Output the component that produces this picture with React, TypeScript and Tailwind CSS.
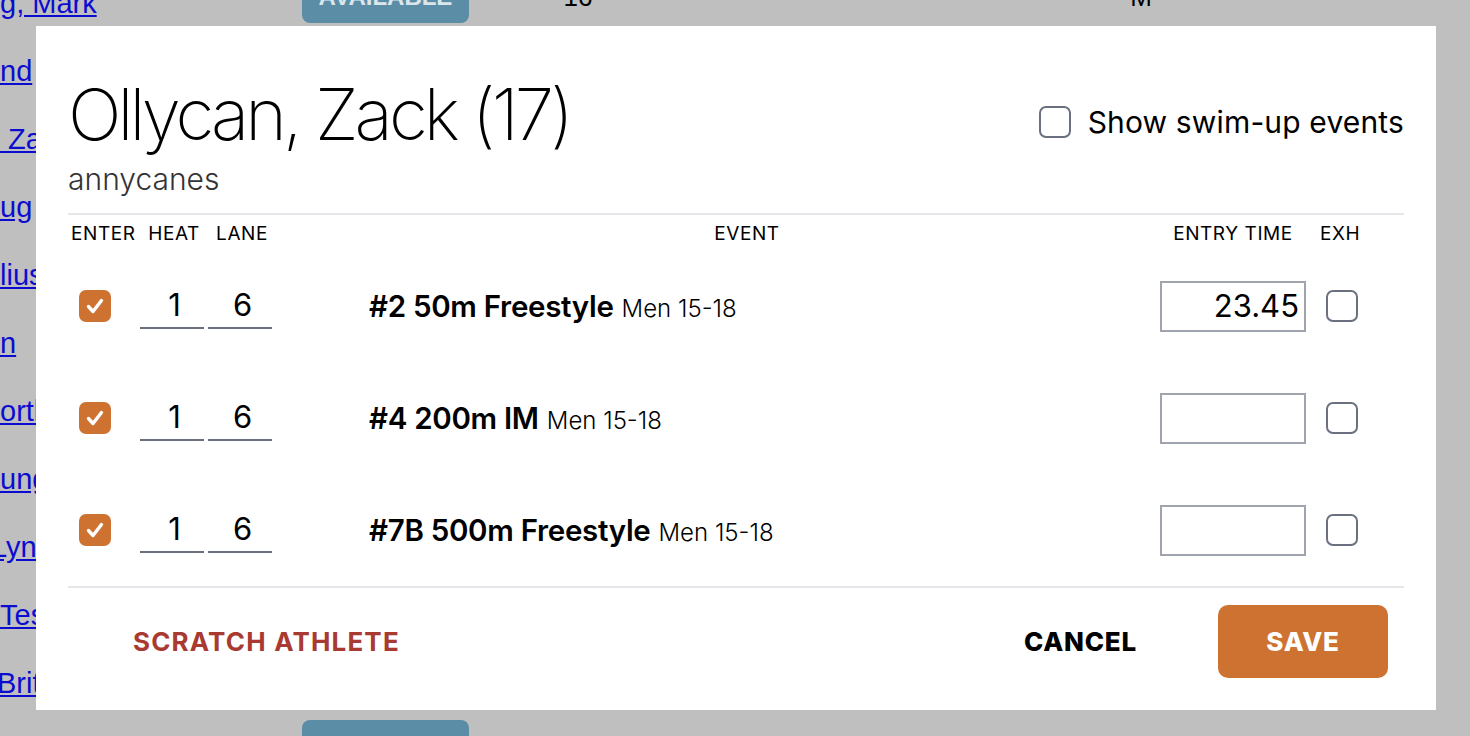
const bgRows = [
  { name: "g, Mark", shift: 0 },
  { name: "nd", shift: 0 },
  { name: " Za", shift: 0 },
  { name: "ug", shift: 0 },
  { name: "lius", shift: 0 },
  { name: "n", shift: 0 },
  { name: "ortl", shift: 0 },
  { name: "ung", shift: 0 },
  { name: "Lyn", shift: -9 },
  { name: "Tes", shift: 0 },
  { name: "Brit", shift: -3 },
  { name: "Ann", shift: 0 },
];

const events = [
  { code: "#2 50m Freestyle", group: "Men 15-18", time: "23.45" },
  { code: "#4 200m IM", group: "Men 15-18", time: "" },
  { code: "#7B 500m Freestyle", group: "Men 15-18", time: "" },
];

function CheckMark() {
  return (
    <svg viewBox="0 0 32 32" className="h-[32px] w-[32px]">
      <rect x="0" y="0" width="32" height="32" rx="7" fill="#cd7230" />
      <path
        d="M9.5 16.5 L14 21.5 L22.5 10.5"
        fill="none"
        stroke="#ffffff"
        strokeWidth="3.4"
        strokeLinecap="round"
        strokeLinejoin="round"
      />
    </svg>
  );
}

function EmptyBox() {
  return <div className="h-[32px] w-[32px] shrink-0 rounded-[7px] border-2 border-[#6b7080] bg-white" />;
}

export default function App() {
  return (
    <div
      className="relative h-[736px] w-full overflow-hidden bg-[#bfbfbf]"
      style={{ fontFamily: "Inter, 'Noto Sans', sans-serif" }}
    >
      {/* page behind the dialog, scrolled sideways */}
      <div className="mt-[-37px] flex flex-col" style={{ fontFamily: "'Liberation Sans', Arial, sans-serif" }}>
        {bgRows.map((row, i) => (
          <div key={i} className="flex h-[68px] items-center">
            <div className="w-[302px] shrink-0 overflow-hidden pt-[12px]">
              <a
                className="block whitespace-pre text-[29px] leading-[34px] text-[#0c0cd0] underline"
                style={{ marginLeft: row.shift }}
              >
                {row.name}
              </a>
            </div>
            <div className="flex h-[51px] w-[167px] shrink-0 items-center justify-center rounded-[8px] bg-[#5b8ea6] text-[24px] font-bold text-[#dbe6eb]">
              AVAILABLE
            </div>
            <div className="w-[218px] shrink-0 text-center text-[26px] text-black">16</div>
            <div className="w-[908px] shrink-0 text-center text-[26px] text-black">M</div>
          </div>
        ))}
      </div>

      {/* dialog */}
      <div className="absolute left-[36px] top-[26px] flex h-[684px] w-[1400px] flex-col bg-white px-[32px] pt-[53px] text-black">
        <div className="flex items-start justify-between">
          <div className="flex flex-col">
            <h1 className="text-[71px] font-extralight leading-none tracking-[-0.055em]">Ollycan, Zack (17)</h1>
            <div className="mt-[14px] text-[30px] font-light leading-none text-[#333]">annycanes</div>
          </div>
          <label className="mt-[27px] flex items-center gap-[17px]">
            <EmptyBox />
            <span className="text-[30px] leading-none tracking-[0.005em]">Show swim-up events</span>
          </label>
        </div>

        <div className="mt-[19px] h-[2px] bg-[#e6e6ea]" />

        {/* column headings */}
        <div className="flex h-[35px] items-center pt-[4px] text-[19px] tracking-[0.03em]">
          <div className="w-[72px] pl-[3px] whitespace-nowrap">ENTER</div>
          <div className="w-[68px] text-center">HEAT</div>
          <div className="w-[68px] text-center">LANE</div>
          <div className="flex-1 pl-[58px] text-center">EVENT</div>
          <div className="w-[146px] whitespace-nowrap text-center">ENTRY TIME</div>
          <div className="flex w-[98px] pl-[12px]">
            <div className="w-[44px] text-center">EXH</div>
          </div>
        </div>

        {events.map((ev) => (
          <div key={ev.code} className="flex h-[112px] items-center">
            <div className="w-[72px] pl-[11px]">
              <CheckMark />
            </div>
            <div className="flex w-[68px]">
              <div className="flex h-[46px] w-[64px] items-center justify-center border-b-2 border-[#6b7080] pl-[5px] text-[31px]">1</div>
            </div>
            <div className="flex w-[68px]">
              <div className="flex h-[46px] w-[64px] items-center justify-center border-b-2 border-[#6b7080] pl-[5px] text-[31px]">6</div>
            </div>
            <div className="flex-1 pl-[93px] whitespace-nowrap">
              <span className="text-[29.5px] font-semibold tracking-[-0.01em]">{ev.code}</span>
              <span className="ml-[8px] text-[24px] font-light">{ev.group}</span>
            </div>
            <div className="flex h-[51px] w-[146px] items-center justify-end border-2 border-[#a0a4ae] pr-[5px] text-[31px]">
              {ev.time}
            </div>
            <div className="flex w-[98px] pl-[20px]">
              <EmptyBox />
            </div>
          </div>
        ))}

        <div className="h-[2px] bg-[#e6e6ea]" />

        <div className="mt-[17px] flex items-center">
          <button className="ml-[65px] text-[26px] font-bold tracking-[0.045em] text-[#a93a32]">SCRATCH ATHLETE</button>
          <div className="flex-1" />
          <button className="mr-[81px] text-[26px] font-extrabold tracking-[0.03em] text-black">CANCEL</button>
          <button className="mr-[16px] flex h-[73px] w-[170px] items-center justify-center rounded-[10px] bg-[#cd7230] text-[26px] font-extrabold tracking-[0.03em] text-white">
            SAVE
          </button>
        </div>
      </div>
    </div>
  );
}
